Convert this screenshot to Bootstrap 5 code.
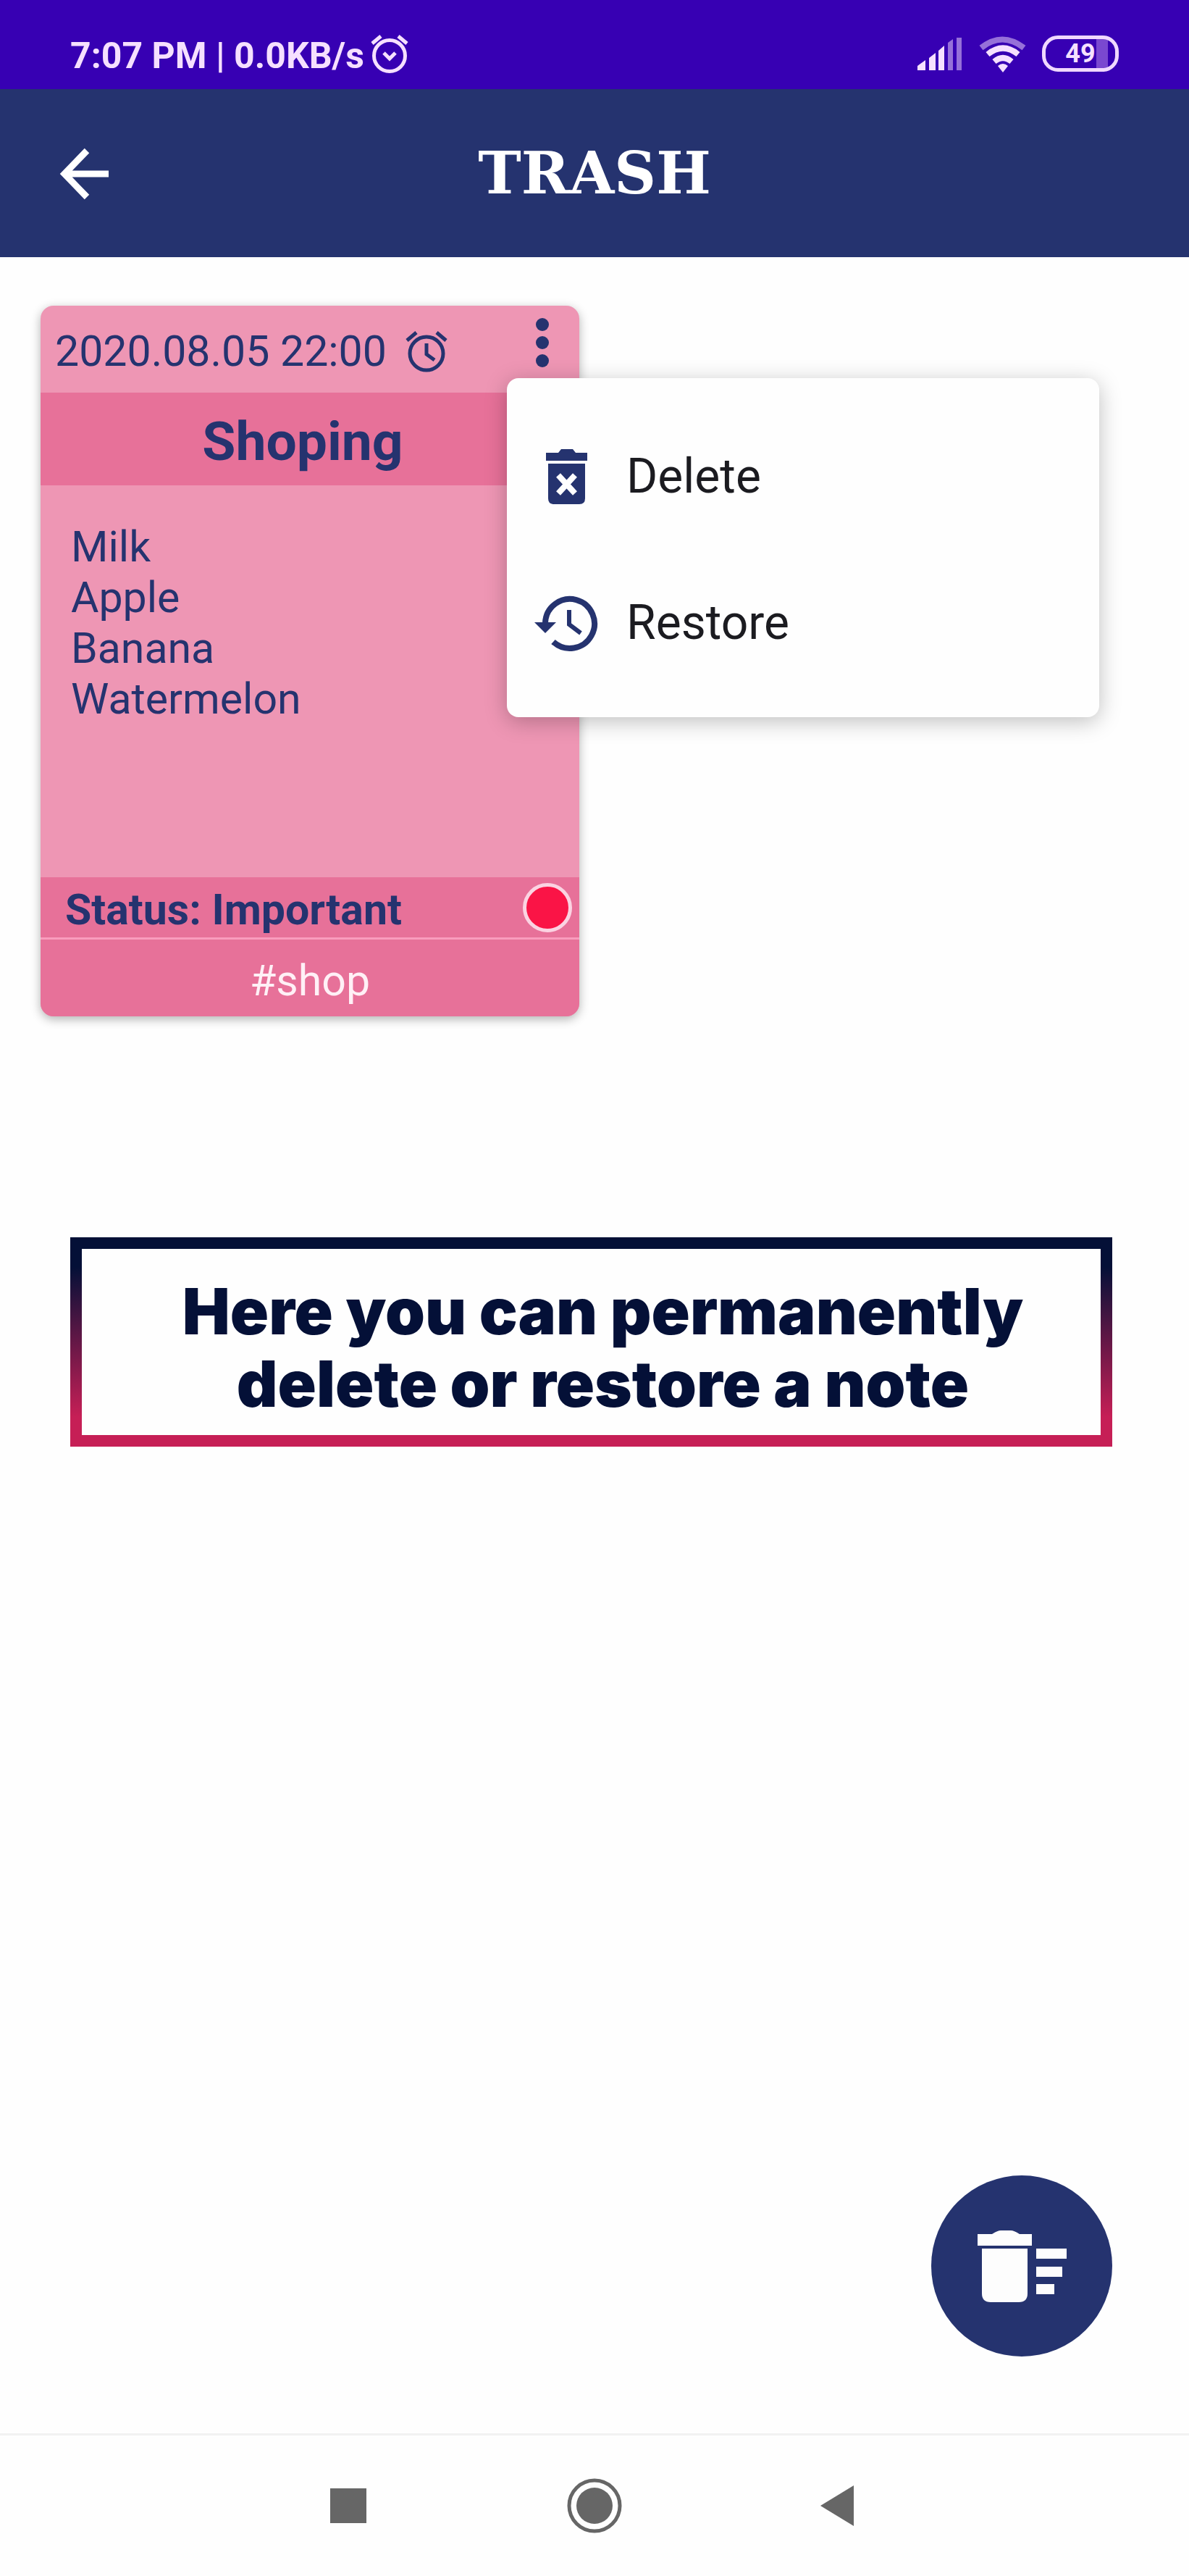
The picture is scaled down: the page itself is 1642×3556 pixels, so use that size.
<!DOCTYPE html>
<html lang="en">
<head>
<meta charset="utf-8">
<meta name="viewport" content="width=device-width, initial-scale=1">
<title>Trash</title>
<link href="https://cdn.jsdelivr.net/npm/bootstrap@5.3.0/dist/css/bootstrap.min.css" rel="stylesheet">
<style>
  :root { --navy: #25336f; --pink: #ee96b4; --rose: #e77199; }
  body { font-family: Roboto, "Liberation Sans", sans-serif; background: #fefefe; color: var(--navy); font-size: 59px; line-height: 70px; }
  svg { display: block; flex: none; }
  .btn, .btn:hover, .btn:active { color: inherit; }
  .statusbar { background: #3700b3; color: #f6e0ff; height: 123px; padding: 0 97px; font-size: 50px; font-weight: 700; }
  .clock { padding-top: 42px; }
  .clock svg { margin-bottom: 6px; }
  .indicators { padding-top: 49px; }
  .battery { width: 106px; height: 50px; border: 5px solid #f0d8ff; border-radius: 22px; font-size: 36px; line-height: 40px; font-weight: 700; background: linear-gradient(90deg, transparent 70px, #7a48d0 70px, #7a48d0 86px, transparent 86px); }
  .appbar { background: var(--navy); color: #fff; height: 232px; padding: 0 76px; }
  .appbar-side { width: 82px; }
  .appbar-title { font-family: "DejaVu Serif", serif; font-weight: 700; font-size: 80px; line-height: 88px; }
  .notes { padding: 67px 35px 0; }
  .note-col { padding: 0 21px; }
  .note { border-radius: 18px; background: var(--pink); box-shadow: 0 4px 14px rgba(0,0,0,.3); overflow: hidden; }
  .note-top { height: 120px; padding: 6px 36px 0 20px; }
  .note-more { width: 30px; height: 80px; }
  .note-title { background: var(--rose); font-size: 75px; line-height: 128px; height: 128px; font-weight: 700; padding: 3px 20px 0 0; }
  .note-body { height: 541px; padding: 50px 42px; }
  .note-status { background: var(--rose); height: 86px; padding: 0 10px 0 34px; border-bottom: 3px solid #f99dbd; font-weight: 700; }
  .note-status-text { padding-top: 6px; }
  .status-dot { width: 68px; height: 68px; border: 5px solid #fbd3e2; border-radius: 50%; background: #fa1446; }
  .note-tag { background: var(--rose); color: #fff0f6; height: 106px; line-height: 114px; }
  .note-menu { top: 100px; left: calc(100% - 121px); width: 818px; padding: 35px 0 29px; border: 0; border-radius: 16px; background: #fefefe; box-shadow: 0 6px 30px rgba(0,0,0,.25); }
  .note-menu .dropdown-item { height: 202px; padding: 0 37px; gap: 38px; font-size: 66px; color: #1b1b20; }
  .note-menu svg { color: var(--navy); }
  .hint { margin: 305px 106px 0 97px; border: 16px solid; border-image: linear-gradient(#041037 10%, #c61f56 90%) 1; padding: 36px 0 21px 32px; color: #041037; font-family: Inter, sans-serif; font-weight: 900; font-size: 88px; line-height: 100px; }
  .fab { width: 250px; height: 250px; margin: 0 106px 106px; border: 0; border-radius: 50%; background: var(--navy); }
  .sysnav { border-top: 3px solid #f2f2f2; height: 197px; color: #666; }
  .sysnav button { width: 340px; height: 194px; }
</style>
</head>
<body class="d-flex flex-column min-vh-100">

<div class="statusbar d-flex justify-content-between align-items-start">
  <div class="clock d-flex align-items-center gap-2">
    <span>7:07 PM | 0.0KB/s</span>
    <svg width="54" height="56" viewBox="0 0 54 56" fill="none" stroke="currentColor" stroke-width="5">
      <circle cx="27" cy="31" r="21.5"/><path d="M19 27l8 8 8-8"/><path d="M3 14L15 4M51 14L39 4"/>
    </svg>
  </div>
  <div class="indicators d-flex align-items-start">
    <svg width="172" height="52" viewBox="0 26 172 52" fill="currentColor">
      <path d="M0 74V68L11 60V74zM16 57l9-7v24h-9zM29 47l8-7v34h-8z"/>
      <path d="M42 36l7-5v43h-7zM54 29h7v45h-7z" opacity=".5"/>
      <g fill="none" stroke="currentColor" stroke-width="8">
        <path d="M88 43Q117 20 147 43" opacity=".5"/><path d="M97 52Q118 35 139 52"/><path d="M106 62Q118 52 130 62"/>
      </g>
      <path d="M111 68q7-6 14 0l-7 9z"/>
    </svg>
    <span class="battery d-flex justify-content-center">49</span>
  </div>
</div>

<header class="appbar d-flex align-items-center justify-content-between">
  <button class="btn appbar-side border-0 p-0" type="button" aria-label="Back">
    <svg width="82" height="82" viewBox="0 0 82 82" fill="none" stroke="currentColor" stroke-width="9"><path d="M74 42H13M44 10L13 42L44 74"/></svg>
  </button>
  <h1 class="appbar-title m-0">TRASH</h1>
  <span class="appbar-side"></span>
</header>

<main class="flex-grow-1 d-flex flex-column">
  <section class="notes">
    <div class="row g-0">
      <div class="col-6 note-col position-relative">
        <article class="note">
          <div class="note-top d-flex align-items-center">
            <time datetime="2020-08-05T22:00">2020.08.05 22:00</time>
            <svg class="ms-4" width="62" height="60" viewBox="0 0 62 60" fill="none" stroke="currentColor" stroke-width="5">
              <circle cx="31" cy="33" r="23"/><path d="M31 19v15l11 8"/><path d="M4 15L17 4M58 15L45 4"/>
            </svg>
            <button class="note-more btn border-0 p-0 ms-auto mb-4" type="button" aria-label="Note menu" aria-expanded="true">
              <svg width="30" height="70" viewBox="0 0 30 70" fill="currentColor"><circle cx="15" cy="10" r="9"/><circle cx="15" cy="35" r="9"/><circle cx="15" cy="60" r="9"/></svg>
            </button>
          </div>
          <h2 class="note-title text-center m-0">Shoping</h2>
          <ul class="note-body list-unstyled m-0">
            <li>Milk</li><li>Apple</li><li>Banana</li><li>Watermelon</li>
          </ul>
          <div class="note-status d-flex align-items-center justify-content-between">
            <span class="note-status-text">Status: Important</span><span class="status-dot"></span>
          </div>
          <div class="note-tag text-center">#shop</div>
        </article>
        <div class="dropdown-menu show note-menu">
          <button class="dropdown-item d-flex align-items-center" type="button">
            <svg width="90" height="84" viewBox="0 0 90 84" fill="currentColor">
              <path d="M17 9h17l4-5h16l4 5h16v11H17z"/>
              <path d="M20 24h51v48q0 8-8 8H28q-8 0-8-8z"/>
              <path d="M34 40l23 25M57 40L34 65" stroke="#fff" stroke-width="8"/>
            </svg>
            Delete
          </button>
          <button class="dropdown-item d-flex align-items-center" type="button">
            <svg width="90" height="84" viewBox="0 0 90 84" fill="none" stroke="currentColor" stroke-width="8">
              <path d="M16 42a34 34 0 1 1 11 26"/><path d="M49 24v20l16 12" stroke-width="6"/>
              <path d="M1 41h30L16 56z" fill="currentColor" stroke="none"/>
            </svg>
            Restore
          </button>
        </div>
      </div>
    </div>
  </section>

  <p class="hint text-center mb-0">Here you can permanently<br>delete or restore a note</p>

  <button class="fab btn p-0 mt-auto align-self-end" type="button" aria-label="Empty trash">
    <svg width="250" height="250" viewBox="0 0 250 250" fill="#fdfdfd">
      <path d="M64 81h20q8-5 12-5h14q4 0 12 5h17v16H64z"/>
      <path d="M70 101h63v62q0 12-12 12H82q-12 0-12-12z"/>
      <path d="M145 101h42v14h-42zM145 126h36v14h-36zM145 150h25v14h-25z"/>
    </svg>
  </button>
</main>

<nav class="sysnav d-flex justify-content-center" aria-label="System">
  <button class="btn border-0 p-0 d-flex align-items-center justify-content-center" type="button" aria-label="Recent apps">
    <svg width="50" height="50" viewBox="0 0 50 50" fill="currentColor"><path d="M0 1h50v48H0z"/></svg>
  </button>
  <button class="btn border-0 p-0 d-flex align-items-center justify-content-center" type="button" aria-label="Home">
    <svg width="76" height="76" viewBox="0 0 76 76"><circle cx="38" cy="38" r="35" fill="none" stroke="currentColor" stroke-width="5"/><circle cx="38" cy="38" r="25" fill="currentColor"/></svg>
  </button>
  <button class="btn border-0 p-0 d-flex align-items-center justify-content-center" type="button" aria-label="Back">
    <svg width="56" height="56" viewBox="0 0 56 56" fill="currentColor"><path d="M0 28L46 0v56z"/></svg>
  </button>
</nav>

<script src="https://cdn.jsdelivr.net/npm/bootstrap@5.3.0/dist/js/bootstrap.bundle.min.js"></script>
</body>
</html>
